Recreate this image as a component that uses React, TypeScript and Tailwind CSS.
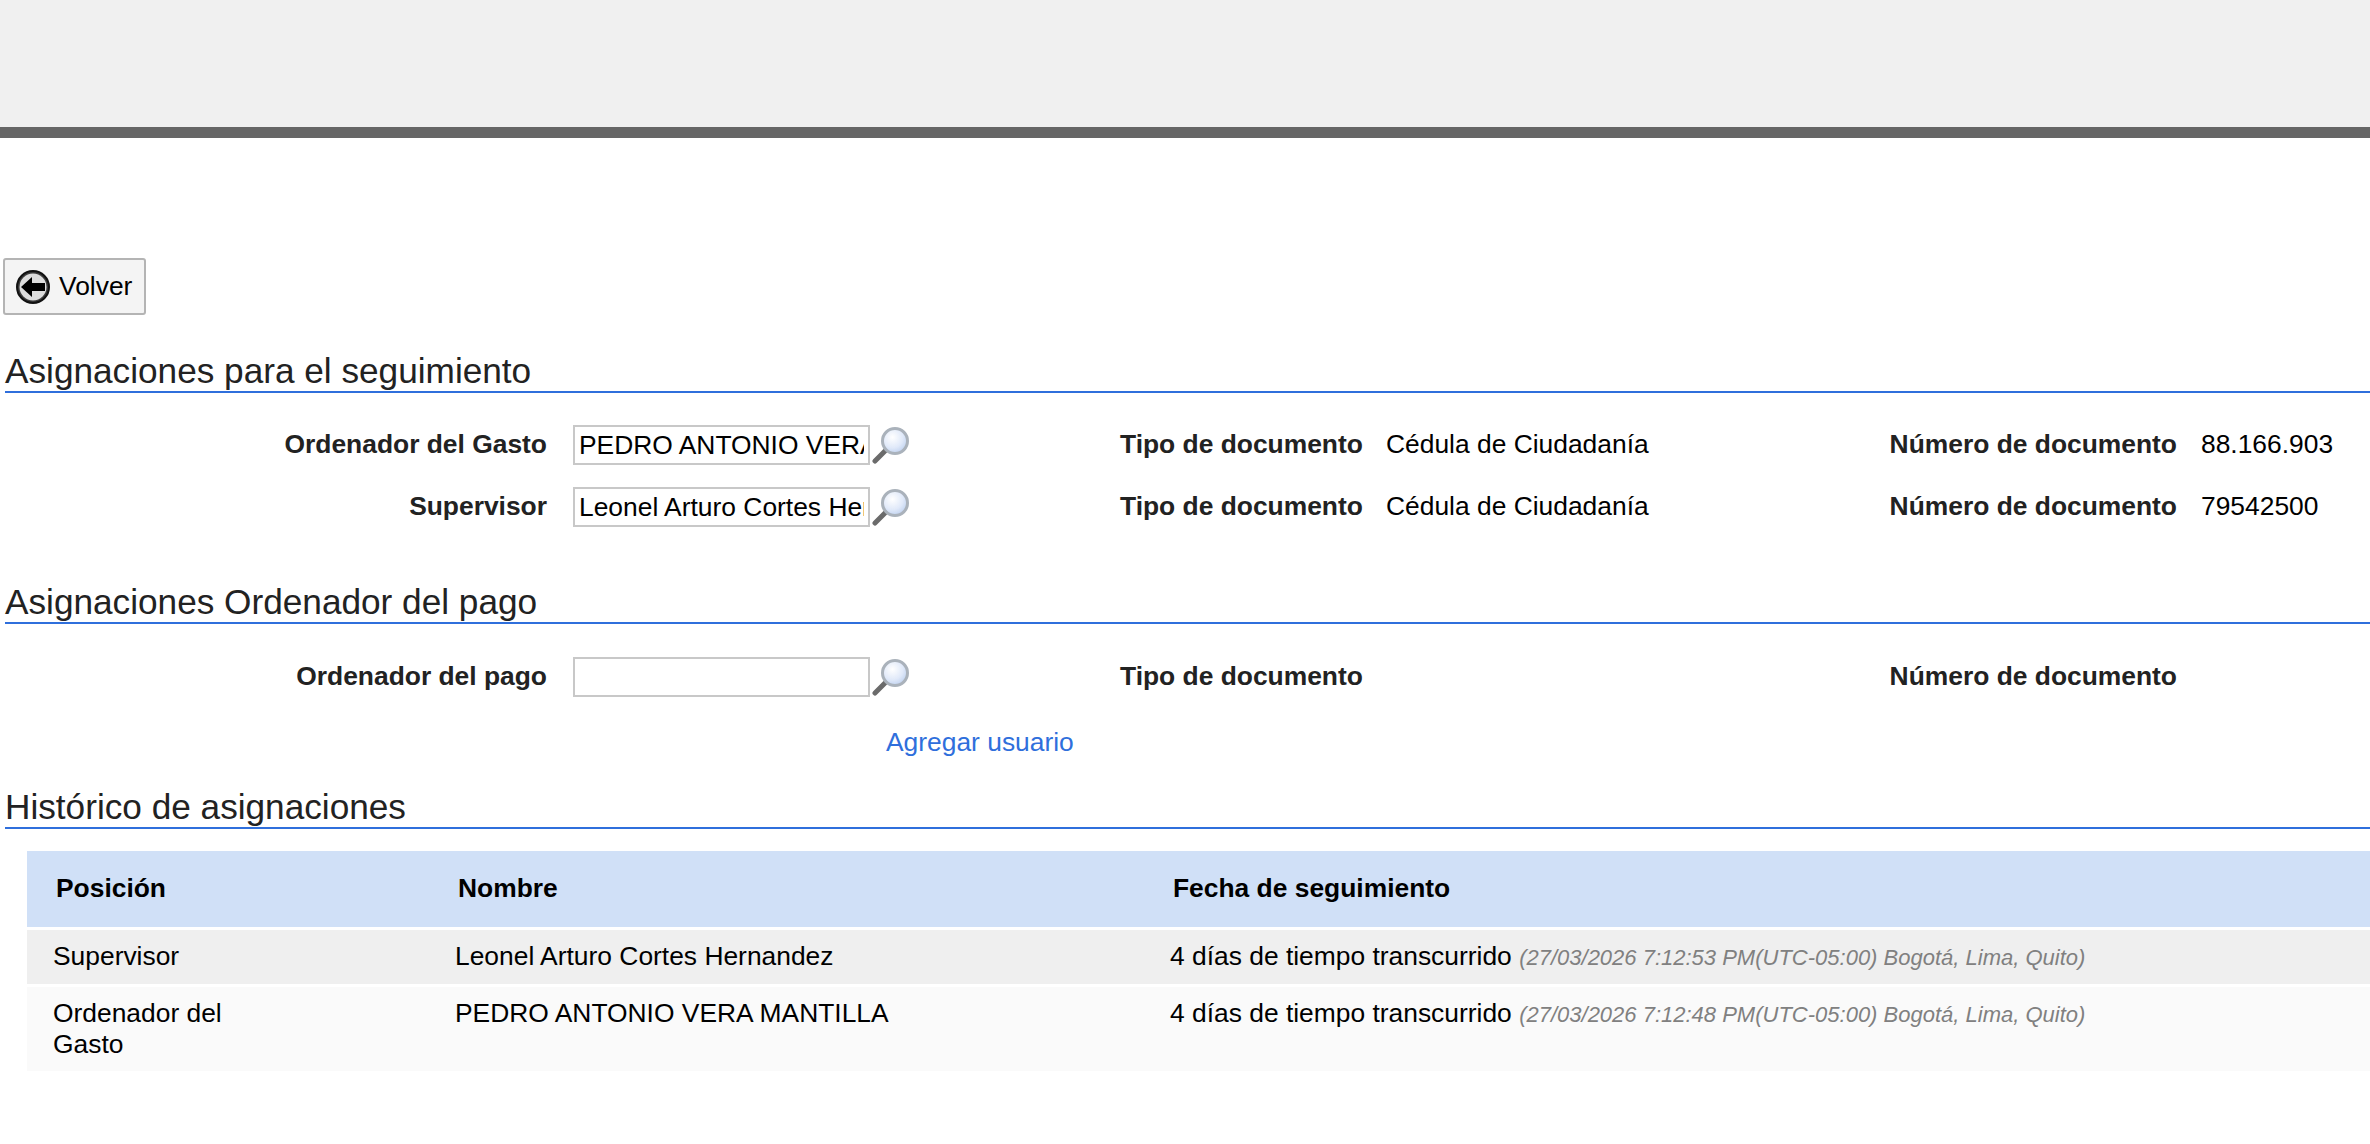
import React from "react";

const Lupa = () => (
  <svg width="40" height="40" viewBox="0 0 40 40" className="shrink-0 ml-[2px] blur-[0.5px]">
    <defs>
      <radialGradient id="lente" cx="40%" cy="35%" r="70%">
        <stop offset="0%" stopColor="#ffffff" />
        <stop offset="60%" stopColor="#e0e9f9" />
        <stop offset="100%" stopColor="#bccfee" />
      </radialGradient>
    </defs>
    <path d="M13 26 L3 36" stroke="#6b6b6b" strokeWidth="5" strokeLinecap="round" />
    <circle cx="23" cy="16" r="12.5" fill="url(#lente)" stroke="#aab2bb" strokeWidth="3" />
  </svg>
);

const Seccion = ({ titulo }: { titulo: string }) => (
  <h2 className="ml-[5px] border-b-2 border-[#2f6fdc] text-[35.2px] leading-[40px] text-[#222222] font-normal">
    {titulo}
  </h2>
);

const Fila = ({
  etiqueta,
  valor,
  tipo,
  numero,
}: {
  etiqueta: string;
  valor: string;
  tipo: string;
  numero: string;
}) => (
  <div className="grid grid-cols-[547px_363px_210px_242px_527px_288px_1fr] items-center h-[62px] text-[26.4px] text-[#222222]">
    <label className="font-bold text-right whitespace-nowrap">{etiqueta}</label>
    <div className="flex items-center pl-[26px]">
      <input
        readOnly
        value={valor}
        className="w-[297px] h-[40px] border-2 border-[#c8c8c8] bg-white px-[4px] text-[26.4px] text-black outline-none"
      />
      <Lupa />
    </div>
    <span />
    <label className="font-bold text-right whitespace-nowrap">Tipo de documento</label>
    <span className="pl-[24px] text-black whitespace-nowrap">{tipo}</span>
    <label className="font-bold text-right whitespace-nowrap">Número de documento</label>
    <span className="pl-[24px] text-black whitespace-nowrap">{numero}</span>
  </div>
);

const historico = [
  {
    posicion: "Supervisor",
    nombre: "Leonel Arturo Cortes Hernandez",
    fecha: "(27/03/2026 7:12:53 PM(UTC-05:00) Bogotá, Lima, Quito)",
  },
  {
    posicion: "Ordenador del Gasto",
    nombre: "PEDRO ANTONIO VERA MANTILLA",
    fecha: "(27/03/2026 7:12:48 PM(UTC-05:00) Bogotá, Lima, Quito)",
  },
];

export default function App() {
  return (
    <div className="min-h-[1144px] w-[2370px] overflow-hidden bg-white font-['Liberation_Sans',Arial,sans-serif]">
      <div className="h-[138px] bg-[#f0f0f0] border-b-[11px] border-[#666666]" />

      <div className="pt-[120px] pl-[3px]">
        <button className="flex items-center gap-[8px] w-[143px] h-[57px] pl-[10px] rounded-[3px] border-2 border-[#b4b4b4] bg-[#f4f4f4] text-[26.4px] text-black">
          <svg width="36" height="38" viewBox="0 0 36 38" className="blur-[0.7px]">
            <circle cx="18" cy="19" r="16" fill="#3a3a3a" stroke="#111111" strokeWidth="2" />
            <circle cx="18" cy="19" r="13.5" fill="#dddddd" />
            <path d="M6 19 L17 9 V15 H30 V23 H17 V29 Z" fill="#000000" />
          </svg>
          Volver
        </button>
      </div>

      <div className="mt-[36px]">
        <Seccion titulo="Asignaciones para el seguimiento" />
      </div>
      <div className="mt-[21px]">
        <Fila
          etiqueta="Ordenador del Gasto"
          valor="PEDRO ANTONIO VERA MANTILLA"
          tipo="Cédula de Ciudadanía"
          numero="88.166.903"
        />
        <Fila
          etiqueta="Supervisor"
          valor="Leonel Arturo Cortes Hernandez"
          tipo="Cédula de Ciudadanía"
          numero="79542500"
        />
      </div>

      <div className="mt-[44px]">
        <Seccion titulo="Asignaciones Ordenador del pago" />
      </div>
      <div className="mt-[22px]">
        <Fila etiqueta="Ordenador del pago" valor="" tipo="" numero="" />
      </div>
      <div className="mt-[14px] h-[40px] pl-[886px] text-[26.4px] leading-[40px] text-[#2f6fdc]">
        <a>Agregar usuario</a>
      </div>

      <div className="mt-[25px]">
        <Seccion titulo="Histórico de asignaciones" />
      </div>

      <div className="mt-[22px] ml-[27px] flex flex-col gap-[3px] text-[26.4px] text-black">
        <div className="grid grid-cols-[402px_715px_1fr] h-[76px] items-center bg-[#d0e0f7] font-bold">
          <span className="pl-[29px]">Posición</span>
          <span className="pl-[29px]">Nombre</span>
          <span className="pl-[29px]">Fecha de seguimiento</span>
        </div>
        {historico.map((fila, i) => (
          <div
            key={fila.nombre}
            className={`grid grid-cols-[402px_715px_1fr] items-start py-[11px] leading-[31px] ${
              i % 2 === 0 ? "bg-[#efefef]" : "bg-[#fafafa]"
            }`}
          >
            <span className="pl-[26px] w-[240px]">{fila.posicion}</span>
            <span className="pl-[26px]">{fila.nombre}</span>
            <span className="pl-[26px]">
              4 días de tiempo transcurrido{" "}
              <em className="text-[22px] text-[#808080]">{fila.fecha}</em>
            </span>
          </div>
        ))}
      </div>
    </div>
  );
}
